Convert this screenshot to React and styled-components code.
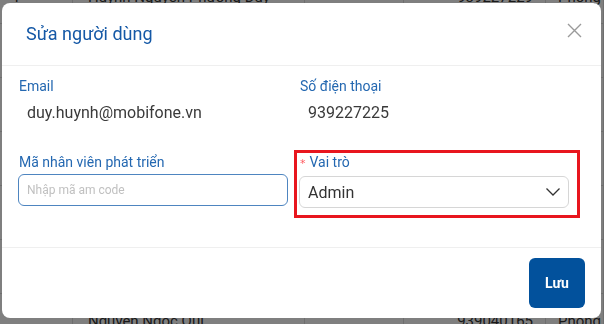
import React from 'react';
import styled, { createGlobalStyle } from 'styled-components';

const Global = createGlobalStyle`
  html, body { margin: 0; padding: 0; }
  body {
    width: 604px;
    height: 324px;
    overflow: hidden;
    background: #ffffff;
    font-family: Roboto, "Noto Sans", "Liberation Sans", sans-serif;
  }
`;

/* ---------- background page (table under the mask) ---------- */
const Page = styled.div`
  width: 604px;
  height: 324px;
  overflow: hidden;
`;

const Table = styled.div`
  margin-top: -30px;
  display: flex;
  flex-direction: column;
`;

const Row = styled.div`
  display: grid;
  grid-template-columns: 73px 232px 99px 142px 1fr;
  height: 54px;
  border-bottom: 1px solid #dcdcdc;
  box-sizing: border-box;
`;

const Cell = styled.div`
  display: flex;
  align-items: center;
  justify-content: ${(p) => (p.$right ? 'flex-end' : 'flex-start')};
  padding: 0 12px 0 ${(p) => (p.$pl ? p.$pl : 12)}px;
  border-right: 1px solid #dcdcdc;
  font-size: 15px;
  color: #333;
  white-space: nowrap;
  overflow: hidden;
`;

const Mask = styled.div`
  position: fixed;
  inset: 0;
  background: rgba(0, 0, 0, 0.5);
`;

/* ---------- modal ---------- */
const Modal = styled.div`
  position: fixed;
  left: 2px;
  top: 3px;
  width: 599px;
  height: 315px;
  background: #fff;
  border-radius: 8px;
  display: flex;
  flex-direction: column;
  overflow: hidden;
`;

const Header = styled.div`
  height: 63px;
  box-sizing: border-box;
  padding: 0 19px 0 24px;
  display: flex;
  align-items: flex-start;
  justify-content: space-between;
  border-bottom: 1px solid #efefef;
`;

const Title = styled.div`
  margin-top: 19px;
  font-size: 18px;
  line-height: 24px;
  color: #1458a6;
`;

const Close = styled.button`
  margin-top: 20px;
  width: 15px;
  height: 15px;
  padding: 0;
  border: 0;
  background: transparent;
  display: flex;
  cursor: pointer;
`;

const Body = styled.div`
  flex: 1;
  padding: 9px 16px 0 16px;
  display: grid;
  grid-template-columns: 270px 270px;
  column-gap: 11px;
  row-gap: 26px;
  align-content: start;
`;

const Field = styled.div`
  position: relative;
  display: flex;
  flex-direction: column;
  ${(p) =>
    p.$highlight &&
    `
    &::after {
      content: '';
      position: absolute;
      left: -5px;
      right: -11px;
      top: -1px;
      bottom: -10px;
      border: 3px solid #e8161e;
      pointer-events: none;
    }
  `}
`;

const Label = styled.div`
  font-size: 14px;
  line-height: 22px;
  color: #2468b1;
  padding-left: 1px;
`;

const Required = styled.span`
  color: #ff5a5f;
  margin-right: 4px;
  font-family: "DejaVu Sans", sans-serif;
  font-size: 11px;
`;

const Value = styled.div`
  margin-top: 4px;
  padding-left: 9px;
  font-size: 16px;
  line-height: 24px;
  color: #3a3a3a;
`;

const Input = styled.input`
  margin-top: 1px;
  height: 32px;
  box-sizing: border-box;
  border: 1px solid #4e85c0;
  border-radius: 6px;
  padding: 0 8px;
  font-family: inherit;
  font-size: 12px;
  color: #333;
  outline: none;
  &::placeholder { color: #c0c0c0; }
`;

const Select = styled.div`
  margin-top: 1px;
  height: 32px;
  box-sizing: border-box;
  border: 1px solid #d6d6d6;
  border-radius: 6px;
  padding: 0 7px 0 8px;
  display: flex;
  align-items: center;
  justify-content: space-between;
  font-size: 16px;
  color: #333;
`;

const Footer = styled.div`
  height: 71px;
  box-sizing: border-box;
  border-top: 1px solid #efefef;
  padding: 10px 16px 0 0;
  display: flex;
  justify-content: flex-end;
  align-items: flex-start;
`;

const SaveButton = styled.button`
  width: 56px;
  height: 50px;
  border: 0;
  border-radius: 6px;
  background: #02519c;
  color: #fff;
  font-family: inherit;
  font-size: 14px;
  font-weight: 700;
  cursor: pointer;
`;

const rows = [
  ['1', 'Huỳnh Nguyễn Phương Duy', '', '939227229', 'Phòng'],
  ['', '', '', '', ''],
  ['', '', '', '', ''],
  ['', '', '', '', ''],
  ['', '', '', '', ''],
  ['', '', '', '', ''],
  ['', 'Nguyễn Ngọc Qui', '', '939040165', 'Phòng'],
];

export default function App() {
  return (
    <>
      <Global />
      <Page>
        <Table>
          {rows.map((r, i) => (
            <Row key={i}>
              <Cell>{r[0]}</Cell>
              <Cell $pl={15}>{r[1]}</Cell>
              <Cell>{r[2]}</Cell>
              <Cell $right>{r[3]}</Cell>
              <Cell>{r[4]}</Cell>
            </Row>
          ))}
        </Table>
      </Page>
      <Mask />
      <Modal>
        <Header>
          <Title>Sửa người dùng</Title>
          <Close aria-label="close">
            <svg width="15" height="15" viewBox="0 0 15 15">
              <path d="M1 1L14 14M14 1L1 14" stroke="#9a9a9a" strokeWidth="1.4" fill="none" />
            </svg>
          </Close>
        </Header>
        <Body>
          <Field>
            <Label>Email</Label>
            <Value>duy.huynh@mobifone.vn</Value>
          </Field>
          <Field>
            <Label>Số điện thoại</Label>
            <Value>939227225</Value>
          </Field>
          <Field>
            <Label>Mã nhân viên phát triển</Label>
            <Input placeholder="Nhập mã am code" />
          </Field>
          <Field $highlight>
            <Label>
              <Required>*</Required>Vai trò
            </Label>
            <Select>
              <span>Admin</span>
              <svg width="16" height="10" viewBox="0 0 16 10">
                <path d="M1.5 1.5L8 8L14.5 1.5" stroke="#333" strokeWidth="1.3" fill="none" />
              </svg>
            </Select>
          </Field>
        </Body>
        <Footer>
          <SaveButton>Lưu</SaveButton>
        </Footer>
      </Modal>
    </>
  );
}
